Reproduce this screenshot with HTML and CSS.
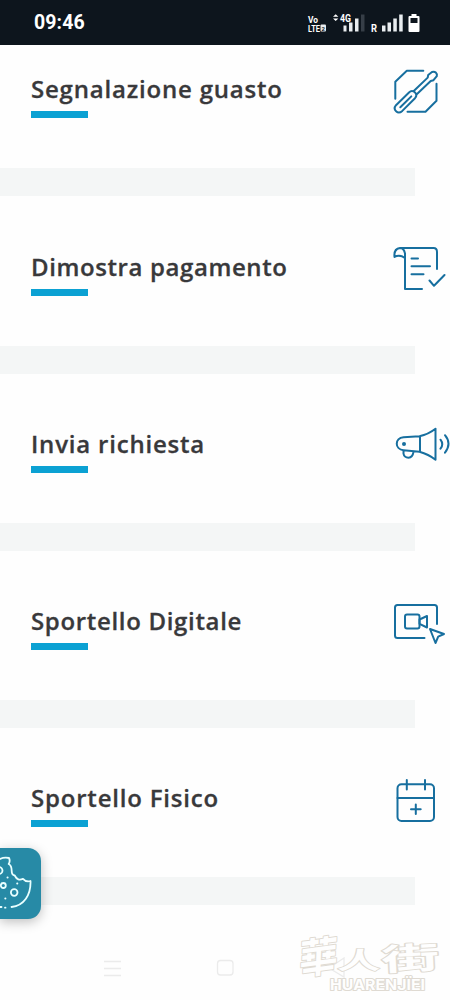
FILE: index.html
```
<!DOCTYPE html>
<html lang="it">
<head>
<meta charset="utf-8">
<title>Servizi</title>
<link rel="stylesheet" href="styles.css">
</head>
<body>
<header class="status">
  <time class="clock">09:46</time>
  <svg class="signals" width="125" height="30" viewBox="300 7 125 30">
    <g class="status-text">
      <text x="308" y="21.500" font-size="9" textLength="10" lengthAdjust="spacingAndGlyphs">Vo</text>
      <text x="308" y="30.500" font-size="9.500" textLength="12" lengthAdjust="spacingAndGlyphs">LTE</text>
      <text x="340" y="21" font-size="10" textLength="11" lengthAdjust="spacingAndGlyphs">4G</text>
      <text x="371" y="30.500" font-size="10" textLength="6" lengthAdjust="spacingAndGlyphs">R</text>
    </g>
    <rect x="320.500" y="23.500" width="5.500" height="7" rx="1" fill="#e9edf0"/>
    <text class="sim" x="321.500" y="29.500">2</text>
    <path d="M333 15.800l2.700-2.500 2.700 2.500zM333 17.500l2.700 2.500 2.700-2.500z" fill="#fff"/>
    <path d="M343.500 24.500h3v6h-3zM349 21.500h3.500v9H349zM355 17.500h3.500v13H355zM382 24.500h3.500v6H382zM387.500 21.500h3.500v9h-3.500zM393.300 17.500h3.500v13h-3.500zM399.200 13.500h3.500v17h-3.500z" fill="#e9edf0"/>
    <path d="M361 13.500h3.500v17H361z" fill="#363e47"/>
    <path fill-rule="evenodd" d="M411.500 13h5v2h2q1 0 1 1v14q0 1-1 1h-9q-1 0-1-1V16q0-1 1-1h2zM410.500 17v5h7v-5z" fill="#fff"/>
  </svg>
</header>
<main>
  <section class="service first">
    <h2 class="title"><span class="t1">Segnalazione guasto</span></h2>
    <svg class="icon" viewBox="390 62.300 60 60">
      <path d="M395.300 99V82l11.500-11h16.500M436.500 84v17L425.500 112H407.500"/>
      <path d="M396 105.500l13-12.700q3-3 5.800-.2 3 2.800.2 5.900l-12.700 12.700c-4.500 4-10-1-6.300-5.700zM400.300 107.500l11-10.800M413.500 91.600l14.200-13.700M416.500 94.700l14.200-13.400M427.700 77.900l.5-2.600 3.800-3c3-1.200 5.500 1.200 4.800 4.200l-3.300 4-2.800.8"/>
    </svg>
  </section>
  <section class="service">
    <h2 class="title"><span class="t2">Dimostra pagamento</span></h2>
    <svg class="icon" viewBox="390 240 60 60">
      <path d="M422 289h-17v-31M405 258v-4.500q-1-5.500-5-5.500c-4.500.5-6 4.500-5.500 9 3-1.800 7-1.500 10.500 1M400 248h33.500q3.500 0 3.500 4v17M411.500 258.500h6.500M411.500 266.300H430M411.500 274.200h12M429.500 280.500l4.500 5.300 10.500-10.800"/>
    </svg>
  </section>
  <section class="service">
    <h2 class="title"><span class="t3">Invia richiesta</span></h2>
    <svg class="icon" viewBox="390 417.300 60 60">
      <path d="M435.500 429v31q-7-5.500-16-8l-16-1.500c-9-1-9-12 0-13l16-1q9-2 16-7.500zM420 437v15M403.500 451v3q.7 4 5 4 4.200 0 5-6M440.500 440q3.500 4.500 0 9M445 435.500q7 8.500 0 17.500"/>
      <circle cx="404" cy="444.300" r="2" class="dot"/>
    </svg>
  </section>
  <section class="service">
    <h2 class="title"><span class="t4">Sportello Digitale</span></h2>
    <svg class="icon" viewBox="390 594.500 60 60">
      <path d="M424.500 638.500H397.500q-2.500 0-2.500-2.500v-28q0-2.500 2.500-2.500h37q2.500 0 2.500 2.500v16.500M430 629.500l5.500 14 2.700-6.300 5.800-2.700z"/>
      <rect x="405" y="615" width="14.500" height="14" rx="2"/>
      <path d="M419.500 620l7.500-3.500v11.500l-7.500-3.700z"/>
    </svg>
  </section>
  <section class="service">
    <h2 class="title"><span class="t5">Sportello Fisico</span></h2>
    <svg class="icon" viewBox="390 771.500 60 60">
      <rect x="397.500" y="784.700" width="36.500" height="36.700" rx="4"/>
      <path d="M397.500 798.500H434M406.800 780.500v9.500M425 780.500v9.500M415.800 805v9.500M411 809.800h9.700"/>
    </svg>
  </section>
</main>
<button class="cookie" aria-label="Cookie">
  <svg width="41" height="71" viewBox="0 848 41 71">
    <path d="M0 859q4-2 9-1 1.500 3-.3 6 3 1.500 3 7 0 4 3 4.500 3 6 8.300 3.300 3.300 3.700 7.500 2.200c.5 14-6.500 24.500-19 26"/>
    <path d="M0 907h1.500M5 907.700h.5"/>
    <circle cx="-1" cy="870.500" r="3.500"/><circle cx="3.300" cy="885.500" r="2.500"/><circle cx="14.200" cy="892.500" r="3.300"/>
    <path class="crumbs" d="M7.500 877.500h.1M17.200 883.500h.1M5.300 898.500h.1"/>
  </svg>
</button>
<footer class="bottom">
  <svg width="450" height="80" viewBox="0 920 450 80">
    <g class="nav"><path d="M104 961.500h17M104 968.500h17M104 975.500h17"/><rect x="217.500" y="960.500" width="15.500" height="14.500" rx="3"/><path d="M344 958l-15 10 15 9z"/></g>
    <g class="brand">
      <g class="hanzi">
        <text font-size="42" transform="translate(299 975) skewX(-10) rotate(-8) scale(.9 1)">華</text>
        <text font-size="32" transform="translate(337 969) skewX(-6) scale(1.350 .75)">人</text>
        <text font-size="34" transform="translate(382 971) rotate(-3) scale(1.700 .9)">街</text>
      </g>
      <text class="latin" x="330" y="990" textLength="95" lengthAdjust="spacingAndGlyphs">HUARENJÏEI</text>
    </g>
  </svg>
</footer>
</body>
</html>
```

FILE: styles.css
```
* { box-sizing: border-box; }
body {
  margin: 0;
  height: 1000px;
  overflow: hidden;
  background: #fefefe;
  font-family: "Open Sans", "Noto Sans", sans-serif;
}
.status {
  height: 45px;
  padding: 0 25px 0 34px;
  display: flex;
  align-items: center;
  justify-content: space-between;
  background: #0d151d;
  color: #fff;
}
.clock { font: 700 19.5px/45px Roboto, sans-serif; letter-spacing: 0.1px; }
.signals { display: block; }
.status-text { fill: #fff; font-family: Roboto, sans-serif; font-weight: 700; }
.sim { font: 700 6px Roboto, sans-serif; fill: #0d151d; }
.service {
  height: 177.25px;
  padding: 0 0 46px 31px;
  display: flex;
  align-items: flex-end;
  justify-content: space-between;
  border-bottom: 28px solid transparent;
  background: linear-gradient(#f4f6f6, #f4f6f6) 0 100% / 415px 28px no-repeat border-box;
}
.service.first { height: 151.25px; }
.title {
  margin: 0 0 4px;
  color: #39393b;
  font-size: 24px;
  font-weight: 600;
  line-height: 34px;
  white-space: nowrap;
  -webkit-text-stroke: 0.3px #39393b;
}
.title span { display: block; }
.title::after {
  content: "";
  display: block;
  width: 57px;
  height: 7px;
  margin-top: 5px;
  background: #0ba1d3;
}
.t1 { letter-spacing: 0.8px; }
.t2 { letter-spacing: 0.6px; }
.t3 { letter-spacing: 0.8px; }
.t4 { letter-spacing: 0.67px; }
.t5 { letter-spacing: 0.8px; }
.icon {
  width: 60px;
  height: 60px;
  flex: none;
  fill: none;
  stroke: #176f9f;
  stroke-width: 2;
  stroke-linecap: round;
  stroke-linejoin: round;
}
.icon .dot { fill: #176f9f; stroke: none; }
.cookie {
  position: absolute;
  left: 0;
  top: 848px;
  width: 41px;
  height: 71px;
  padding: 0;
  border: 0;
  border-radius: 0 13px 13px 0;
  background: #278aa6;
  box-shadow: 0 3px 12px rgba(0, 0, 0, 0.25);
}
.cookie svg {
  display: block;
  fill: none;
  stroke: #e9ffff;
  stroke-width: 1.8;
  stroke-linecap: round;
  stroke-linejoin: round;
}
.cookie .crumbs { stroke-width: 2; }
.bottom { padding-top: 15px; }
.bottom svg { display: block; }
.nav { fill: none; stroke: #ebebeb; stroke-width: 1.3; }
.brand { fill: #fefefe; stroke: #dfdad2; stroke-width: 2; paint-order: stroke; stroke-linejoin: round; }
.hanzi { font-family: "Noto Sans CJK TC", sans-serif; font-weight: 700; }
.latin { font: 700 14px Inter, sans-serif; }
```
